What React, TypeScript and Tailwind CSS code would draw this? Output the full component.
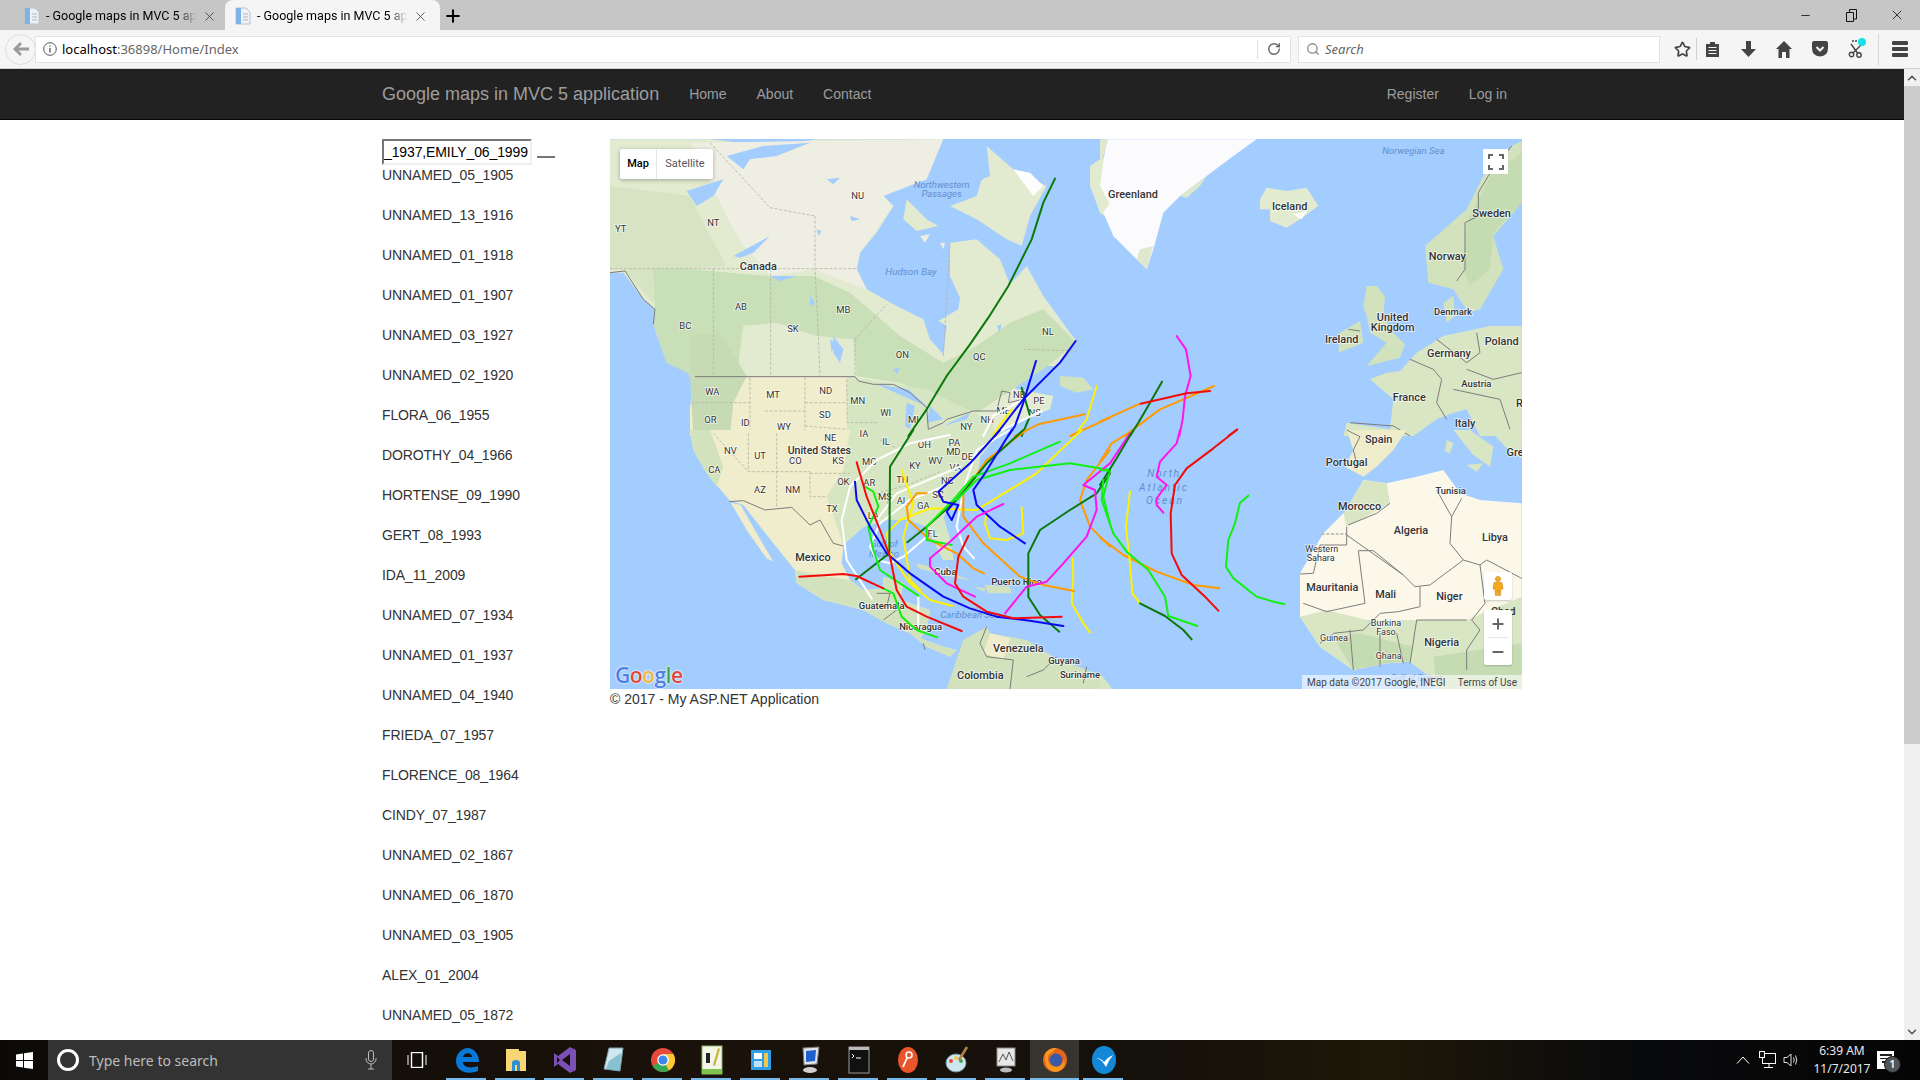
import { ChevronDown, ChevronUp, Minus, Plus, RotateCw, Search, Star, X } from "lucide-react";

const hurricanes = [
  "UNNAMED_05_1905", "UNNAMED_13_1916", "UNNAMED_01_1918", "UNNAMED_01_1907", "UNNAMED_03_1927", "UNNAMED_02_1920",
  "FLORA_06_1955", "DOROTHY_04_1966", "HORTENSE_09_1990", "GERT_08_1993", "IDA_11_2009", "UNNAMED_07_1934",
  "UNNAMED_01_1937", "UNNAMED_04_1940", "FRIEDA_07_1957", "FLORENCE_08_1964", "CINDY_07_1987", "UNNAMED_02_1867",
  "UNNAMED_06_1870", "UNNAMED_03_1905", "ALEX_01_2004", "UNNAMED_05_1872",
];

const GREEN = "#0b780b";
const LIME = "#12f012";
const BLUE = "#0a0af0";
const RED = "#f50a0a";
const ORANGE = "#ff9a00";
const YELLOW = "#fff200";
const MAGENTA = "#ff14ee";
const WHITE = "#ffffff";

type Track = [string, string];
type Label = [string, number, number, number?];

// paths below are in 3x crop coordinates, each group is scaled back down
const nwTracks: Track[] = [
  [GREEN, "M1335,128 L1300,200 L1265,310 L1195,450 L1135,545 L1080,625 L1010,720 L950,820 L895,900"],
  [GREEN, "M1235,755 L1260,840 L1235,900"],
  [WHITE, "M1240,790 L1150,840 L1120,900"],
  [WHITE, "M1295,825 L1160,890"],
  [YELLOW, "M1205,820 L1160,880 L1150,900"],
  [BLUE, "M1397,615 L1350,680 L1240,790 L1155,900"],
  [BLUE, "M1278,675 L1240,800 L1215,870 L1195,900"],
  [ORANGE, "M1425,835 L1285,865 L1215,900"],
  [YELLOW, "M1460,750 L1430,850 L1400,890"],
  [ORANGE, "M1500,845 L1380,900"],
];

const swTracks: Track[] = [
  [WHITE, "M1020,15 L900,40 L800,90 L720,170 L695,270 L710,390 L785,505"],
  [WHITE, "M1000,170 L900,210 L810,280 L780,350 L800,390 L840,400 L880,380 L950,320"],
  [WHITE, "M1200,0 L1100,60 L1060,180 L1040,290 L1060,350 L1092,385"],
  [WHITE, "M1050,110 L860,190 L800,270"],
  [WHITE, "M925,500 L925,590"],
  [YELLOW, "M1415,0 L1280,130 L1100,240 L960,235 L870,270 L830,310 L840,370 L900,460 L960,510 L1027,528"],
  [YELLOW, "M875,120 L910,220 L880,320 L900,450 L930,480"],
  [YELLOW, "M1235,232 L1240,310 L1190,330 L1140,325 L1125,280 L1130,250"],
  [YELLOW, "M1388,385 L1390,440 L1385,520 L1420,580 L1440,607"],
  [ORANGE, "M1250,0 L1130,90 L1060,190 L1060,260 L1120,340 L1230,440 L1300,465 L1392,483"],
  [ORANGE, "M950,190 L920,190 L890,230 L895,270 L960,330 L1040,370 L1090,415 L1122,430"],
  [ORANGE, "M1500,60 L1430,150 L1410,210 L1440,290 L1500,350"],
  [GREEN, "M910,0 L840,110 L838,370 L738,448"],
  [GREEN, "M1240,0 L1130,100 L1040,210 L950,290 L892,337"],
  [GREEN, "M1500,130 L1460,190 L1380,240 L1290,300 L1255,370 L1255,500 L1290,555 L1348,605"],
  [LIME, "M765,170 L790,185 L805,230 L775,290 L790,360 L810,420 L925,497"],
  [LIME, "M820,475 L850,490 L875,560 L920,600 L982,622"],
  [LIME, "M1350,35 L1200,100 L1090,140 L1030,210 L950,290 L950,330 L1025,345"],
  [LIME, "M1500,120 L1380,100 L1200,120 L1100,150 L1040,210"],
  [LIME, "M1500,120 L1480,200 L1500,280"],
  [BLUE, "M735,155 L740,210 L780,290 L830,370 L900,430 L1000,500 L1080,535 L1160,560 L1260,572 L1360,588"],
  [BLUE, "M1205,0 L1125,130 L1090,180 L1100,225 L1170,290 L1245,340"],
  [BLUE, "M1170,0 L1080,100 L985,185 L1000,215 L1045,225 L1025,270 L1010,245 L1030,220"],
  [MAGENTA, "M1180,222 L1100,260 L1020,335 L960,385 L960,410 L1010,460 L1095,500"],
  [MAGENTA, "M1500,100 L1420,165 L1455,180 L1460,240 L1430,320 L1360,400 L1310,455 L1250,470 L1185,550"],
  [RED, "M740,97 L770,200 L810,300 L840,380 L860,480 L890,530 L950,560 L1055,603"],
  [RED, "M568,440 L700,432 L740,438 L820,475"],
  [RED, "M1075,318 L1045,380 L1035,460 L1060,500 L1130,545 L1210,565 L1355,560"],
];

const neTracks: Track[] = [
  [ORANGE, "M342,750 L180,820 L100,880 L75,900"],
  [ORANGE, "M0,857 L120,803"],
  [GREEN, "M186,737 L150,800 L115,860 L90,900"],
  [MAGENTA, "M230,600 L258,640 L272,720 L255,780 L248,850 L238,900"],
  [RED, "M122,803 L260,772 L330,765"],
  [RED, "M412,880 L385,900"],
];

const seTracks: Track[] = [
  [ORANGE, "M100,0 L35,40 L0,95"],
  [ORANGE, "M0,322 L70,375 L170,425 L280,465 L358,475"],
  [MAGENTA, "M90,10 L30,100"],
  [GREEN, "M100,0 L50,85 L0,165"],
  [LIME, "M25,122 L0,120"],
  [YELLOW, "M90,185 L78,290 L90,400 L97,490 L120,520"],
  [LIME, "M10,150 L5,210 L40,310 L80,365 L145,420 L195,500 L205,558 L292,588"],
  [GREEN, "M120,520 L195,558 L250,600 L275,628"],
  [MAGENTA, "M240,0 L230,40 L180,95 L170,140 L200,165 L170,205 L170,225 L190,248"],
  [RED, "M410,0 L340,55 L260,115 L225,165 L212,250 L215,370 L245,435 L320,505 L355,542"],
  [LIME, "M445,197 L420,218 L405,280 L385,330 L378,410 L400,445 L470,500 L520,515 L553,522"],
];

const nwLabels: Label[] = [
  ["NU", 743, 188], ["NT", 310, 269], ["YT", 32, 287], ["AB", 393, 521], ["BC", 226, 578], ["SK", 549, 587],
  ["MB", 700, 530], ["ON", 877, 665], ["QC", 1108, 671], ["NL", 1314, 596], ["WA", 307, 776], ["MT", 489, 785],
  ["ND", 647, 773], ["MN", 743, 803], ["WI", 827, 839], ["MI", 910, 860], ["OR", 301, 860], ["ID", 406, 869],
  ["SD", 645, 845], ["WY", 522, 881], ["NY", 1069, 881], ["NH", 1132, 860], ["ME", 1180, 834], ["NB", 1228, 785],
  ["PE", 1287, 803], ["NS", 1274, 839], ["Canada", 445, 403, 29],
];
const swLabels: Label[] = [
  ["NE", 661, 32], ["IA", 762, 20], ["IL", 828, 44], ["OH", 943, 53], ["PA", 1033, 47], ["MD", 1030, 74], ["DE", 1072, 89],
  ["NV", 361, 71], ["UT", 450, 86], ["CO", 556, 101], ["KS", 684, 101], ["MO", 778, 104], ["KY", 915, 116], ["WV", 976, 101],
  ["VA", 1036, 122], ["CA", 313, 128], ["TN", 877, 158], ["NC", 1012, 161], ["OK", 700, 164], ["AR", 778, 167], ["AZ", 450, 188],
  ["NM", 548, 188], ["MS", 825, 209], ["AL", 877, 221], ["SC", 984, 203], ["GA", 940, 236], ["TX", 666, 245], ["LA", 790, 266], ["FL", 968, 320],
  ["United States", 628, 72, 28], ["Mexico", 609, 394, 29], ["Cuba", 1006, 434, 26], ["Puerto Rico", 1220, 465, 26],
  ["Guatemala", 815, 536, 25], ["Nicaragua", 932, 600, 25], ["Venezuela", 1225, 667, 29], ["Colombia", 1111, 748, 29],
  ["Guyana", 1362, 702, 25], ["Suriname", 1410, 744, 25],
];
const neLabels: Label[] = [
  ["Greenland", 99, 187, 29], ["Iceland", 569, 222, 29], ["Sweden", 1175, 244, 29], ["Norway", 1042, 371, 29],
  ["Denmark", 1059, 537, 25], ["United", 878, 556, 29], ["Kingdom", 878, 586, 29], ["Ireland", 725, 622, 29],
  ["Poland", 1205, 628, 29], ["Germany", 1047, 664, 29], ["Austria", 1129, 752, 25], ["France", 928, 796, 29], ["Italy", 1095, 874, 29], ["R", 1258, 812, 29],
];
const seLabels: Label[] = [
  ["Spain", 836, 40, 29], ["Portugal", 740, 109, 29], ["Gre", 1245, 79, 29], ["Tunisia", 1052, 192, 25], ["Morocco", 779, 241, 29],
  ["Algeria", 933, 313, 29], ["Libya", 1185, 334, 29], ["Western", 665, 366, 24], ["Sahara", 662, 393, 24], ["Mauritania", 697, 484, 29],
  ["Mali", 857, 505, 29], ["Niger", 1048, 511, 29], ["Burkina", 858, 588, 24], ["Faso", 858, 615, 24], ["Guinea", 702, 633, 24],
  ["Nigeria", 1025, 649, 29], ["Ghana", 866, 687, 24],
];

function Tracks({ items }: { items: Track[] }) {
  return (
    <g fill="none" strokeWidth="6" strokeLinejoin="round" strokeLinecap="round">
      {items.map(([color, d], i) => (
        <path key={i} d={d} stroke={color} />
      ))}
    </g>
  );
}

function Labels({ items }: { items: Label[] }) {
  return (
    <g className="font-['Roboto',sans-serif]" textAnchor="middle" fill="#333" stroke="#ffffff" strokeOpacity="0.7" strokeWidth="5" paintOrder="stroke">
      {items.map(([text, x, y, size], i) => (
        <text key={i} x={x} y={y} fontSize={(size ?? 25) * 1.13} fontWeight={size && size > 24 ? 500 : 400}>
          {text}
        </text>
      ))}
    </g>
  );
}

function SeaLabel({ x, y, size, spacing, children }: { x: number; y: number; size: number; spacing?: number; children: string }) {
  return (
    <text x={x} y={y} fontSize={size * 1.1} letterSpacing={spacing} textAnchor="middle" fontStyle="italic" fill="#5f8fd0" className="font-['Roboto',sans-serif]">
      {children}
    </text>
  );
}

function MapDrawing() {
  return (
    <svg viewBox="610 139 912 550" className="block h-[550px] w-[912px] bg-[#a3ccff]">
      <defs>
        <filter id="soft" x="0" y="0" width="100%" height="100%">
          <feGaussianBlur stdDeviation="2" />
        </filter>
      </defs>
      {/* north-west: Canada and northern US */}
      <g transform="translate(610 136) scale(0.33333)">
        <g filter="url(#soft)">
          <path fill="#e2ead0" d="M0,10 L300,10 L480,30 L620,10 L1000,10 L960,60 L950,130 L880,150 L820,180 L850,210 L800,290 L750,350 L740,400 L770,460 L860,510 L940,550 L960,610 L1000,655 L1010,570 L985,555 L1045,520 L1050,485 L1020,420 L1020,320 L1100,310 L1170,370 L1200,445 L1250,390 L1300,480 L1380,590 L1400,615 L1340,690 L1260,690 L1180,720 L1220,760 L1280,770 L1330,780 L1320,820 L1220,860 L1150,900 L240,900 L240,820 L250,740 L230,700 L170,680 L130,565 L135,520 L100,490 L40,410 L0,410 Z" />
          <path fill="#eeeee3" d="M240,20 L1000,10 L950,130 L820,180 L850,210 L750,350 L740,400 L770,460 L690,430 L610,400 L480,420 L440,370 L400,330 L360,260 L330,200 Z" />
          <path fill="#d6e4c3" d="M0,150 L240,180 L300,300 L350,390 L230,400 L130,500 L40,400 L0,400 Z" />
          <path fill="#c9dfb8" d="M130,400 L250,400 L360,410 L480,420 L610,420 L720,470 L790,530 L870,600 L1000,680 L1100,630 L1200,560 L1300,520 L1400,620 L1300,700 L1100,830 L1000,800 L870,740 L740,720 L730,610 L620,600 L500,560 L400,570 L380,720 L250,720 L170,680 L130,565 L135,500 Z" />
          <path fill="#f0edcd" d="M255,722 L710,722 L712,900 L240,900 L240,820 Z" />
          <path fill="#c6dbb4" d="M240,600 L330,590 L410,720 L370,800 L360,900 L250,900 L240,720 Z" />
          <path fill="#d7e6c2" d="M710,722 L950,760 L1150,860 L1150,900 L712,900 Z" />
          <path fill="#e2ead0" d="M1020,210 L1100,180 L1115,130 L1140,120 L1130,30 L1210,100 L1310,150 L1260,240 L1235,330 L1190,310 L1100,250 Z" />
          <path fill="#fdfdfd" d="M1210,100 L1260,110 L1300,150 L1270,180 Z" />
          <path fill="#e2ead0" d="M890,190 L950,250 L985,270 L920,285 L880,250 Z" />
          <path fill="#eeeee3" d="M930,300 L960,295 L945,320 Z M990,320 L1005,320 L1000,340 Z M1040,80 L1075,70 L1070,115 L1040,115 Z" />
          <path fill="#d2e2bd" d="M1350,720 L1420,725 L1450,760 L1400,770 L1350,750 Z" />
          <path fill="#e2ead0" d="M1440,90 L1500,50 L1500,250 L1470,230 L1440,150 Z" />
          <path fill="#a3ccff" d="M350,60 L460,30 L600,20 L500,60 L420,70 L400,100 Z M230,165 L340,130 L310,180 L260,210 Z M370,360 L480,300 L430,350 L390,365 Z M480,420 L560,420 L510,435 Z M670,600 L700,640 L690,680 L670,650 Z M1000,10 L1130,20 L1120,130 L1010,180 L960,135 Z M800,745 L895,760 L950,810 L900,790 Z M890,800 L915,810 L900,880 L885,870 Z M960,810 L1000,850 L950,860 Z M1000,870 L1080,830 L1070,850 Z M1260,720 L1320,700 L1350,720 L1270,770 Z M620,280 L635,285 L625,300 Z M720,240 L750,250 L725,255 Z M650,130 L690,125 L670,145 Z M1160,570 L1175,565 L1170,590 Z M600,480 L615,500 L600,510 Z M660,610 L675,620 L665,650 Z M850,700 L870,695 L860,715 Z" />
          <path fill="#fdfdfd" d="M1480,170 L1500,130 L1500,200 Z" />
        </g>
        <g fill="none" stroke="#b5b5ab" strokeWidth="2.5" strokeDasharray="9 5">
          <path d="M0,398 L740,398 M310,398 L310,722 M482,398 L482,722 M615,240 L615,398 L625,600 L630,722 M735,610 L735,720 M735,610 L830,505 M480,215 L615,240 M300,20 L480,215 M1000,660 L1020,320 M1240,640 L1400,645" />
          <path d="M420,725 L420,900 M585,725 L585,900 M585,800 L710,800 M710,730 L712,860 L800,860 M465,825 L585,825 M245,800 L420,800 M585,870 L712,880" />
        </g>
        <path fill="none" stroke="#7b7b7b" strokeWidth="3" d="M255,722 L735,722 L745,735 L790,745 L850,745 L900,770 L950,815 L955,880 L1000,860 L1010,850 L1090,825 L1160,825 L1175,765 L1200,770 L1195,800 L1240,790 M0,410 L45,405 L100,490 L135,520 L130,565" />
      </g>

      {/* south-west: US, Mexico, Caribbean */}
      <g transform="translate(610 430) scale(0.33333)">
        <g filter="url(#soft)">
          <path fill="#f0edcd" d="M240,0 L1190,0 L1150,30 L1110,80 L1100,150 L1030,220 L1000,260 L1020,330 L1030,390 L1000,390 L960,310 L950,290 L900,270 L830,270 L760,290 L700,345 L695,400 L720,450 L760,480 L820,475 L820,440 L880,460 L870,510 L960,540 L950,600 L930,625 L1000,650 L1040,660 L1020,680 L950,650 L900,610 L830,580 L760,540 L640,510 L560,460 L555,420 L490,340 L400,225 L360,212 L290,130 L250,60 Z" />
          <path fill="#d7e6c2" d="M720,0 L1190,0 L1150,30 L1110,80 L1100,150 L1030,220 L1000,260 L1020,330 L1030,390 L1000,390 L960,310 L950,290 L900,270 L830,270 L760,290 L700,345 L650,200 L700,120 Z" />
          <path fill="#d2e2bd" d="M240,0 L300,0 L340,110 L320,170 L290,130 L250,60 Z M555,420 L650,440 L720,450 L760,480 L820,475 L820,440 L880,460 L870,510 L960,540 L950,600 L930,625 L1000,650 L1040,660 L1020,680 L950,650 L900,610 L830,580 L760,540 L640,510 L560,460 Z" />
          <path fill="#f0edcd" d="M362,218 L392,225 L440,310 L490,395 L470,385 L410,300 Z" />
          <path fill="#d2e2bd" d="M920,400 L1000,420 L1085,452 L1000,435 L925,415 Z M1125,465 L1200,470 L1205,490 L1135,490 Z M1090,470 L1125,475 L1125,485 Z" />
          <path fill="#d2e2bd" d="M1010,777 L1060,630 L1130,590 L1140,610 L1250,630 L1330,680 L1480,740 L1500,777 Z" />
          <path fill="#f0edcd" d="M1140,610 L1200,625 L1180,690 L1120,670 Z" />
        </g>
        <g fill="none" stroke="#b5b5a0" strokeWidth="2.5" strokeDasharray="9 5">
          <path d="M310,10 L415,125 L600,125 M415,10 L415,125 M500,10 L500,230 M600,125 L600,200 L650,200 M600,130 L720,130 M720,60 L620,60 M810,30 L870,60 M875,170 L800,190 M830,200 L840,270 M880,205 L900,260 M990,125 L880,170" />
        </g>
        <path fill="none" stroke="#7b7b7b" strokeWidth="3" d="M358,215 L400,212 L465,240 L545,232 L600,285 L630,270 L670,340 L700,348 M800,490 L840,490 L830,530 M860,540 L820,570 M1130,590 L1110,640 L1130,680 L1210,690 L1200,777 M1340,680 L1300,720 L1250,740 M1430,710 L1420,760 M940,640 L945,660" />
      </g>

      {/* north-east: Greenland and Europe */}
      <g transform="translate(1100 136) scale(0.33333)">
        <g filter="url(#soft)">
          <path fill="#fbfbfd" d="M20,10 L470,10 L400,60 L320,120 L240,180 L190,230 L160,340 L140,400 L110,370 L40,300 L10,230 L30,200 L0,150 Z" />
          <path fill="#dde8cc" d="M0,10 L25,10 L10,60 L0,80 Z M120,340 L160,330 L140,400 L110,370 Z M240,180 L320,120 L300,150 L260,185 Z" />
          <path fill="#e2ead0" d="M480,190 L500,155 L560,165 L620,155 L655,210 L600,250 L560,275 L510,255 L510,220 L480,220 Z" />
          <path fill="#fdfdfd" d="M580,235 L620,225 L605,250 Z" />
          <path fill="#d2e2bd" d="M1265,15 L1235,30 L1150,120 L1100,220 L975,330 L985,440 L1060,460 L1105,530 L1140,520 L1210,400 L1180,300 L1265,200 Z" />
          <path fill="#c5dcb2" d="M1170,120 L1265,50 L1265,200 L1180,290 L1170,400 L1110,450 L1090,400 L1100,260 Z" />
          <path fill="#d2e2bd" d="M790,510 L800,450 L830,450 L855,480 L850,540 L880,590 L915,625 L900,665 L800,690 L860,620 L810,590 L800,540 Z M715,650 L720,590 L780,555 L790,620 Z M1030,500 L1060,480 L1065,540 L1040,560 Z" />
          <path fill="#d9e6c4" d="M1265,570 L1170,570 L1030,600 L950,650 L900,705 L860,710 L810,730 L880,790 L870,880 L740,860 L730,900 L940,900 L1010,850 L1060,830 L1100,820 L1140,900 L1265,900 Z" />
        </g>
        <path fill="none" stroke="#7b7b7b" strokeWidth="3" d="M1235,30 L1165,120 L1135,170 L1135,240 L1095,260 L1095,400 L1070,435 M1130,590 L1140,650 L1100,680 L1010,610 M930,670 L1000,700 L1025,730 L1010,800 L1040,850 M1100,700 L1180,730 L1265,710 M1060,760 L1200,790 L1230,880 M750,860 L880,870 L930,900 M745,580 L780,585" />
      </g>

      {/* south-east: Spain, north and west Africa */}
      <g transform="translate(1100 430) scale(0.33333)">
        <g filter="url(#soft)">
          <path fill="#efecc9" d="M740,0 L920,0 L880,60 L830,110 L790,140 L735,110 L760,60 Z" />
          <path fill="#d9e6c4" d="M1060,0 L1110,0 L1180,50 L1170,110 L1120,75 Z M1170,0 L1265,0 L1265,85 L1225,60 Z" />
          <path fill="#fbf8ea" d="M790,150 L860,160 L950,140 L1030,120 L1080,190 L1140,210 L1265,220 L1265,777 L1010,777 L990,740 L930,695 L860,700 L760,720 L660,650 L600,560 L600,430 L670,310 L750,230 Z" />
          <path fill="#d9e6c4" d="M790,150 L860,160 L870,220 L780,270 L740,290 L730,250 Z M600,560 L680,540 L800,570 L950,570 L1100,570 L1265,500 L1265,777 L1010,777 L990,740 L930,695 L860,700 L760,720 L660,650 Z" />
          <path fill="#c5dcb2" d="M700,620 L780,610 L940,650 L930,695 L860,700 L760,720 Z M1000,680 L1265,640 L1265,777 L1010,777 Z" />
          <path fill="#d9e6c4" d="M0,777 L0,735 L25,760 L35,777 Z M1040,30 L1060,40 L1050,70 L1035,65 Z M1100,105 L1150,100 L1130,125 Z" />
        </g>
        <path fill="none" stroke="#b0b0a8" strokeWidth="4" strokeDasharray="9 5" d="M665,312 L740,312" />
        <path fill="none" stroke="#7b7b7b" strokeWidth="3" d="M740,0 L780,20 L760,60 L770,100 M740,290 L740,345 L660,345 L640,430 L600,432 M740,315 L910,435 L945,470 L990,465 L1090,390 L1140,405 L1160,390 L1265,445 M775,362 L820,362 L910,435 M775,362 L795,520 L680,545 L610,520 M960,470 L960,530 L895,545 L840,550 L790,600 L700,610 L660,640 M1050,340 L1090,390 M1055,260 L1050,340 M1010,180 L1055,260 M1085,205 L1055,260 M1140,405 L1155,520 L1115,570 L1140,600 L1100,660 L1100,720 M950,570 L1100,570 M950,570 L930,700 M840,610 L840,710 M890,610 L910,700 M750,600 L760,720 M870,220 L830,250 L745,285" />
      </g>

      {/* sea names, then labels, with the tracks on top */}
      <g transform="translate(610 136) scale(0.33333)">
        <SeaLabel x={995} y={156} size={26}>Northwestern</SeaLabel>
        <SeaLabel x={995} y={184} size={26}>Passages</SeaLabel>
        <SeaLabel x={903} y={417} size={27}>Hudson Bay</SeaLabel>
        <Labels items={nwLabels} />
      </g>
      <g transform="translate(610 430) scale(0.33333)">
        <SeaLabel x={822} y={350} size={26}>Gulf of</SeaLabel>
        <SeaLabel x={822} y={380} size={26}>Mexico</SeaLabel>
        <SeaLabel x={1080} y={564} size={26}>Caribbean Sea</SeaLabel>
        <Labels items={swLabels} />
      </g>
      <g transform="translate(1100 136) scale(0.33333)">
        <SeaLabel x={940} y={54} size={26}>Norwegian Sea</SeaLabel>
        <Labels items={neLabels} />
      </g>
      <g transform="translate(1100 430) scale(0.33333)">
        <SeaLabel x={192} y={142} size={28} spacing={5}>North</SeaLabel>
        <SeaLabel x={192} y={182} size={28} spacing={6}>Atlantic</SeaLabel>
        <SeaLabel x={195} y={221} size={28} spacing={6}>Ocean</SeaLabel>
        <SeaLabel x={950} y={752} size={23}>Gulf of Guinea</SeaLabel>
        <Labels items={seLabels} />
        <text x={1210} y={554} fontSize={32} fontWeight={500} textAnchor="middle" fill="#333" className="font-['Roboto',sans-serif]">Chad</text>
      </g>
      <g transform="translate(610 136) scale(0.33333)"><Tracks items={nwTracks} /></g>
      <g transform="translate(610 430) scale(0.33333)"><Tracks items={swTracks} /></g>
      <g transform="translate(1100 136) scale(0.33333)"><Tracks items={neTracks} /></g>
      <g transform="translate(1100 430) scale(0.33333)"><Tracks items={seTracks} /></g>
    </svg>
  );
}

function MapPanel() {
  return (
    <div className="relative h-[550px] w-[912px] overflow-hidden font-['Roboto',sans-serif]">
      <MapDrawing />
      <div className="absolute left-[10px] top-[10px] flex h-[30px] rounded-[2px] bg-white text-[11px] shadow-[0_1px_4px_rgba(0,0,0,0.3)]">
        <div className="flex w-[37px] items-center justify-center border-r border-[#e6e6e6] font-medium text-black">Map</div>
        <div className="flex w-[56px] items-center justify-center text-[#565656]">Satellite</div>
      </div>
      <div className="absolute left-[873px] top-[10px] flex h-[25px] w-[25px] items-center justify-center bg-white">
        <svg width="16" height="16" viewBox="0 0 16 16" fill="none" stroke="#666" strokeWidth="2">
          <path d="M1,5 V1 H5 M11,1 H15 V5 M15,11 V15 H11 M5,15 H1 V11" />
        </svg>
      </div>
      <div className="absolute left-[874px] top-[433px] flex h-[28px] w-[28px] items-center justify-center rounded-[2px] bg-white shadow-[0_1px_2px_rgba(0,0,0,0.2)]">
        <svg width="12" height="20" viewBox="0 0 12 20" fill="#f4a91f" stroke="#c98a10" strokeWidth="0.6">
          <circle cx="6" cy="3" r="2.6" />
          <path d="M2,6.5 H10 L11,13 H9 L8.5,19.5 H6.6 L6,14 L5.4,19.5 H3.5 L3,13 H1 Z" />
        </svg>
      </div>
      <div className="absolute left-[874px] top-[471px] flex h-[55px] w-[28px] flex-col items-center rounded-[2px] bg-white text-[#666] shadow-[0_1px_2px_rgba(0,0,0,0.2)]">
        <div className="flex h-[27px] items-center"><Plus size={16} strokeWidth={3} /></div>
        <div className="h-px w-5 bg-[#e6e6e6]" />
        <div className="flex h-[27px] items-center"><Minus size={16} strokeWidth={3} /></div>
      </div>
      <div className="absolute left-[5px] top-[524px] font-['Open_Sans',sans-serif] text-[21px] font-semibold leading-6 tracking-[-0.5px] [text-shadow:0_0_2px_#fff,0_0_2px_#fff]">
        <span className="text-[#4a80e8]">G</span>
        <span className="text-[#e0483a]">o</span>
        <span className="text-[#f2b632]">o</span>
        <span className="text-[#4a80e8]">g</span>
        <span className="text-[#35a853]">l</span>
        <span className="text-[#e0483a]">e</span>
      </div>
      <div className="absolute bottom-0 right-0 flex h-[14px] w-[220px] items-center justify-between bg-white/60 px-[5px] text-[10px] text-[#444]">
        <span className="whitespace-nowrap">Map data ©2017 Google, INEGI</span>
        <span className="whitespace-nowrap">Terms of Use</span>
      </div>
    </div>
  );
}

function PageIcon() {
  return (
    <svg width="16" height="18" viewBox="0 0 16 18" className="shrink-0">
      <path d="M1,1 H11 L15,5 V17 H1 Z" fill="#eef2f6" stroke="#b9c2cc" />
      <rect x="1" y="1" width="5" height="16" fill="#7fb2e5" />
      <path d="M8,7 H13 M8,10 H13 M8,13 H13" stroke="#b0b8c2" />
    </svg>
  );
}

function Tab({ active, width }: { active?: boolean; width: string }) {
  return (
    <div className={active ? "flex h-[30px] shrink-0 items-center gap-[6px] rounded-t-[8px] bg-[#f5f5f5] pl-[10px] pr-[8px] pt-[2px]" : "flex h-[30px] shrink-0 items-center gap-[6px] pl-[24px] pr-[6px] pt-[2px]"} style={{ width }}>
      <PageIcon />
      <span className="w-[150px] overflow-hidden whitespace-nowrap font-['Roboto',sans-serif] text-[12.5px] text-black [mask-image:linear-gradient(to_right,black_88%,transparent)]">- Google maps in MVC 5 app</span>
      <X size={15} strokeWidth={1.2} className="shrink-0 text-[#333]" />
    </div>
  );
}

function BrowserChrome() {
  return (
    <div className="h-[69px] shrink-0 font-['Noto_Sans',sans-serif]">
      <div className="flex h-[30px] items-center bg-[#c6c6c6]">
        <Tab width="225px" />
        <Tab active width="215px" />
        <Plus size={20} strokeWidth={2.5} className="ml-[3px] mt-[2px] text-black" />
        <div className="ml-auto flex items-center text-black">
          <div className="flex w-[46px] justify-center"><Minus size={13} strokeWidth={1.4} /></div>
          <div className="flex w-[46px] justify-center">
            <svg width="11" height="13" viewBox="0 0 11 13" fill="none" stroke="#111"><path d="M0.5,3.5 H7.5 V12.5 H0.5 Z M3.5,3 V0.5 H10.5 V10 H8" /></svg>
          </div>
          <div className="flex w-[46px] justify-center"><X size={16} strokeWidth={1.1} /></div>
        </div>
      </div>
      <div className="flex h-[39px] items-center border-b border-[#cfcfcf] bg-[#f5f5f5] pl-[5px]">
        <div className="z-10 flex h-[31px] w-[31px] shrink-0 items-center justify-center rounded-full border border-[#dedede] bg-[#f5f5f5]">
          <svg width="16" height="14" viewBox="0 0 16 14" fill="#9a9a9a"><path d="M7,0 L0,7 L7,14 L9,12 L5.5,8.5 H16 V5.5 H5.5 L9,2 Z" /></svg>
        </div>
        <div className="-ml-px flex h-[27px] w-[1256px] shrink-0 items-center border border-[#e3e3e3] bg-white">
          <svg width="14" height="14" viewBox="0 0 14 14" fill="none" stroke="#555" className="ml-[7px] shrink-0">
            <circle cx="7" cy="7" r="6.3" />
            <path d="M7,6 V10.5 M7,3.4 V4.8" strokeWidth="1.3" />
          </svg>
          <span className="ml-[5px] pt-[1px] text-[13px] text-black">localhost<span className="text-[#666]">:36898/Home/Index</span></span>
          <div className="ml-auto flex h-full w-[34px] items-center justify-center">
            <div className="mr-[9px] h-[19px] w-px bg-[#e0e0e0]" />
            <RotateCw size={14} strokeWidth={2.4} className="text-[#666]" />
          </div>
          <div className="w-[4px]" />
        </div>
        <div className="ml-[7px] flex h-[27px] w-[362px] shrink-0 items-center gap-[5px] border border-[#e3e3e3] bg-white pl-[7px]">
          <Search size={14} strokeWidth={2.2} className="text-[#8a8a8a]" />
          <span className="pt-[1px] text-[13px] italic text-[#666]">Search</span>
        </div>
        <div className="flex flex-1 items-center text-[#444]">
          <div className="ml-[11px] flex w-[22px] justify-center"><Star size={17} strokeWidth={2.4} /></div>
          <div className="ml-[3px] h-[22px] w-px bg-[#cfcfcf]" />
          <div className="ml-[6px] flex w-[18px] justify-center">
            <svg width="15" height="17" viewBox="0 0 15 17" fill="#444"><path d="M1,3 H5 V1 H10 V3 H14 V16 H1 Z" /><path d="M3.5,6.5 H11.5 M3.5,9.5 H11.5 M3.5,12.5 H11.5" stroke="#f5f5f5" strokeWidth="1.2" /></svg>
          </div>
          <div className="ml-[18px] flex w-[18px] justify-center">
            <svg width="15" height="16" viewBox="0 0 15 16" fill="#444"><path d="M5,0 H10 V8 H15 L7.5,16 L0,8 H5 Z" /></svg>
          </div>
          <div className="ml-[18px] flex w-[18px] justify-center">
            <svg width="16" height="17" viewBox="0 0 16 17" fill="#444"><path d="M8,0 L16,8 H13.5 V17 H10 V11 H6 V17 H2.5 V8 H0 Z" /></svg>
          </div>
          <div className="ml-[18px] flex w-[18px] justify-center">
            <svg width="16" height="16" viewBox="0 0 16 16"><path d="M0,2 Q0,0 2,0 H14 Q16,0 16,2 V7 Q16,15 8,15.5 Q0,15 0,7 Z" fill="#444" /><path d="M4.5,6 L8,9.5 L11.5,6" fill="none" stroke="#f5f5f5" strokeWidth="2" /></svg>
          </div>
          <div className="relative ml-[18px] flex w-[18px] justify-center">
            <svg width="17" height="18" viewBox="0 0 17 18" fill="none" stroke="#444" strokeWidth="1.4">
              <circle cx="3.5" cy="14.5" r="2.2" /><circle cx="11" cy="15" r="2.2" />
              <path d="M5,13 L13,5 M9.5,13 L3,4" />
              <path d="M4,1 H9" strokeDasharray="2 1" />
            </svg>
            <div className="absolute right-[-1px] top-[-2px] h-[8px] w-[8px] rounded-full bg-[#19dfe6]" />
          </div>
          <div className="ml-[13px] h-[31px] w-px bg-[#d6d6d6]" />
          <div className="ml-[13px] flex flex-col gap-[2.5px]">
            <div className="h-[3.5px] w-[16px] rounded-[1px] bg-[#444]" />
            <div className="h-[3.5px] w-[16px] rounded-[1px] bg-[#444]" />
            <div className="h-[3.5px] w-[16px] rounded-[1px] bg-[#444]" />
          </div>
        </div>
      </div>
    </div>
  );
}

function Navbar() {
  return (
    <div className="flex h-[51px] shrink-0 items-center border-b border-[#080808] bg-[#222] pl-[382px] pt-[1px] font-['Liberation_Sans',Arial,sans-serif] text-[14px] text-[#9d9d9d]">
      <div className="flex w-[1140px] items-center">
        <span className="mr-[30px] text-[18px]">Google maps in MVC 5 application</span>
        <span className="mr-[30px]">Home</span>
        <span className="mr-[30px]">About</span>
        <span>Contact</span>
        <span className="ml-auto mr-[30px]">Register</span>
        <span className="mr-[15px]">Log in</span>
      </div>
    </div>
  );
}

function Scrollbar() {
  return (
    <div className="flex h-full w-[16px] shrink-0 flex-col bg-[#f0f0f0] text-[#505050]">
      <div className="flex h-[17px] items-center justify-center"><ChevronUp size={14} strokeWidth={2.5} /></div>
      <div className="h-[658px] bg-[#cdcdcd]" />
      <div className="mt-auto flex h-[17px] items-center justify-center"><ChevronDown size={14} strokeWidth={2.5} /></div>
    </div>
  );
}

function Content() {
  return (
    <div className="flex min-h-0 flex-1 overflow-hidden bg-white font-['Liberation_Sans',Arial,sans-serif] text-[14px] text-[#333]">
      <div className="w-[382px] shrink-0" />
      <div className="w-[228px] shrink-0 pt-[19px] tracking-[-0.12px]">
        <div className="flex items-end">
          <input
            readOnly
            value="_1937,EMILY_06_1999"
            className="h-[26px] w-[150px] border-2 border-b-[#eee] border-l-[#767676] border-r-[#eee] border-t-[#767676] bg-white text-[14px] text-black outline-none"
          />
          <div className="mb-[7px] ml-[5px] h-[2px] w-[18px] bg-[#777]" />
        </div>
        {hurricanes.map((name, i) => (
          <div key={i} className="h-10 leading-5">{name}</div>
        ))}
      </div>
      <div className="pt-[19px]">
        <MapPanel />
        <p className="leading-5">© 2017 - My ASP.NET Application</p>
      </div>
    </div>
  );
}

function TaskIcon({ active, children }: { active?: boolean; children: React.ReactNode }) {
  return (
    <div className={active ? "relative flex h-full w-[49px] items-center justify-center bg-white/15" : "relative flex h-full w-[49px] items-center justify-center"}>
      {children}
      <div className={active ? "absolute bottom-0 left-0 h-[2px] w-full bg-[#76b9ed]" : "absolute bottom-0 left-[4px] h-[2px] w-[40px] bg-[#76b9ed]"} />
    </div>
  );
}

function Taskbar() {
  return (
    <div className="flex h-10 shrink-0 items-center bg-[linear-gradient(90deg,#0c0a08,#1a120a_35%,#14100a_60%,#1e1808_72%,#090a0c_85%,#050505)] font-['Noto_Sans',sans-serif] text-white">
      <div className="flex h-full w-12 items-center justify-center">
        <svg width="17" height="17" viewBox="0 0 17 17" fill="#fff"><path d="M0,2.4 L7,1.4 V8 H0 Z M8,1.3 L17,0 V8 H8 Z M0,9 H7 V15.6 L0,14.6 Z M8,9 H17 V17 L8,15.7 Z" /></svg>
      </div>
      <div className="flex h-full w-[344px] items-center bg-[#333]">
        <div className="ml-[9px] h-[22px] w-[22px] rounded-full border-[3px] border-white" />
        <span className="ml-[10px] text-[14px] text-[#bdbdbd]">Type here to search</span>
        <svg width="12" height="20" viewBox="0 0 12 20" fill="none" stroke="#bbb" className="ml-auto mr-[15px]">
          <rect x="3.5" y="0.5" width="5" height="11" rx="2.5" />
          <path d="M1,8 V9 A5,5 0 0 0 11,9 V8 M6,14 V19 M3,19 H9" />
        </svg>
      </div>
      <div className="flex h-full w-[50px] items-center justify-center">
        <svg width="20" height="16" viewBox="0 0 20 16" fill="none" stroke="#fff">
          <rect x="4.5" y="0.5" width="11" height="15" strokeWidth="1.4" />
          <path d="M1,3 V13 M19,3 V13" />
        </svg>
      </div>
      <TaskIcon>
        <svg width="24" height="26" viewBox="0 0 24 26"><path d="M12,1 C20,1 24,8 24,15 H8 C8,20 15,22 23,19 V24 C13,28 1,25 1,14 C1,7 6,2 12,1 Z M8,10 H17 C17,5 9,5 8,10 Z" fill="#0a78d7" fillRule="evenodd" /></svg>
      </TaskIcon>
      <TaskIcon>
        <svg width="22" height="24" viewBox="0 0 22 24"><path d="M1,1 H14 V3 H21 V23 H1 Z" fill="#f7d774" /><path d="M7,23 V15 Q7,12 11,12 Q15,12 15,15 V23 H12 V17 H10 V23 Z" fill="#2d8fd5" /></svg>
      </TaskIcon>
      <TaskIcon>
        <svg width="24" height="28" viewBox="0 0 24 28"><path d="M17,1 L23,4 V24 L17,27 L5,18 L1,21 V7 L5,10 Z M17,8 L9,14 L17,20 Z M4,11 V17 L7,14 Z" fill="#7b4fb3" fillRule="evenodd" /></svg>
      </TaskIcon>
      <TaskIcon>
        <svg width="22" height="26" viewBox="0 0 22 26"><path d="M6,1 H20 L17,24 L1,22 Z" fill="#cfe7ee" stroke="#7d9aa3" /><path d="M6,14 L18,6 L17,24 L3,22 Z" fill="#58a8bc" opacity="0.6" /></svg>
      </TaskIcon>
      <TaskIcon>
        <svg width="26" height="26" viewBox="0 0 26 26">
          <circle cx="13" cy="13" r="12" fill="#e44b3c" />
          <path d="M13,13 L2.6,19 A12,12 0 0 0 19,23.4 Z" fill="#35a853" />
          <path d="M13,13 L19,23.4 A12,12 0 0 0 23.4,7 L13,7 Z" fill="#fbc935" />
          <circle cx="13" cy="13" r="5.8" fill="#fff" />
          <circle cx="13" cy="13" r="4.5" fill="#3f86ee" />
        </svg>
      </TaskIcon>
      <TaskIcon>
        <svg width="22" height="30" viewBox="0 0 22 30"><rect x="1" y="1" width="20" height="28" fill="#f2f6e8" stroke="#8fb06a" /><rect x="1" y="24" width="20" height="5" fill="#7ec24f" /><path d="M5,8 H9 V18 H5 Z" fill="#222" /><path d="M12,20 L17,3 L19,4 L14,21 Z" fill="#c9b23a" /></svg>
      </TaskIcon>
      <TaskIcon>
        <svg width="22" height="22" viewBox="0 0 22 22"><rect x="1" y="1" width="20" height="20" fill="#2f9ee4" /><rect x="4" y="4" width="8" height="6" fill="#fff" /><rect x="14" y="4" width="4" height="14" fill="#f3c64a" /><rect x="4" y="12" width="8" height="6" fill="#bde3fa" /></svg>
      </TaskIcon>
      <TaskIcon>
        <svg width="22" height="28" viewBox="0 0 22 28"><path d="M4,2 L20,1 L18,18 L5,19 Z" fill="#dfe4ea" stroke="#777" /><path d="M7,5 L17,4 L16,15 L7,16 Z" fill="#1f5fd0" /><ellipse cx="11" cy="24" rx="7" ry="3" fill="#cfcfcf" /></svg>
      </TaskIcon>
      <TaskIcon>
        <svg width="22" height="28" viewBox="0 0 22 28"><rect x="1" y="1" width="20" height="26" fill="#111" stroke="#999" /><rect x="1" y="1" width="20" height="3" fill="#bbb" /><path d="M4,8 L6,10 L4,12 M8,12 H13" stroke="#fff" fill="none" /></svg>
      </TaskIcon>
      <TaskIcon>
        <svg width="22" height="28" viewBox="0 0 22 28"><ellipse cx="11" cy="14" rx="10" ry="13" fill="#e9552b" /><circle cx="12" cy="9" r="3" fill="none" stroke="#fff" strokeWidth="1.6" /><path d="M10,12 L6,21" stroke="#fff" strokeWidth="1.8" /></svg>
      </TaskIcon>
      <TaskIcon>
        <svg width="24" height="28" viewBox="0 0 24 28"><ellipse cx="11" cy="17" rx="10" ry="9" fill="#cfe6ef" stroke="#7795a3" /><circle cx="6" cy="15" r="2" fill="#e44b3c" /><circle cx="11" cy="12" r="2" fill="#f3c64a" /><circle cx="16" cy="15" r="2" fill="#35a853" /><path d="M14,14 L22,1" stroke="#b5813e" strokeWidth="2.5" /></svg>
      </TaskIcon>
      <TaskIcon>
        <svg width="22" height="28" viewBox="0 0 22 28"><rect x="2" y="2" width="18" height="18" fill="#e8e8e8" stroke="#888" /><path d="M4,16 L8,8 L11,14 L14,6 L18,15" fill="none" stroke="#555" /><ellipse cx="11" cy="24" rx="6" ry="2.6" fill="#bbb" /></svg>
      </TaskIcon>
      <TaskIcon active>
        <svg width="26" height="26" viewBox="0 0 26 26">
          <circle cx="13" cy="13" r="12" fill="#e8641b" />
          <circle cx="14" cy="13" r="6.5" fill="#3a5aa8" />
          <path d="M3,7 Q7,0 15,1 Q11,3 10,6 Q5,7 6,13 Q7,20 15,20 Q21,19 22,12 Q25,22 14,25 Q2,24 3,7 Z" fill="#f59a1d" />
        </svg>
      </TaskIcon>
      <TaskIcon>
        <svg width="26" height="30" viewBox="0 0 26 30"><ellipse cx="13" cy="15" rx="12" ry="14" fill="#1488d8" /><path d="M5,13 Q10,13 13,17 Q17,12 22,10 Q18,15 15,22 L13,19 Q10,14 5,13 Z" fill="#fff" /></svg>
      </TaskIcon>
      <div className="ml-auto flex h-full items-center">
        <svg width="14" height="8" viewBox="0 0 14 8" fill="none" stroke="#fff" className="mr-[9px]"><path d="M1,7.5 L7,1 L13,7.5" /></svg>
        <svg width="17" height="18" viewBox="0 0 17 18" fill="none" stroke="#fff" className="mr-[7px]"><rect x="3.5" y="2.5" width="13" height="10" /><rect x="0.5" y="0.5" width="5" height="6" fill="#111" /><path d="M10,13 V16 M5,16.5 H14" /></svg>
        <svg width="16" height="16" viewBox="0 0 16 16" fill="none" stroke="#ddd" className="mr-[13px]"><path d="M1,5.5 H4 L8,2 V14 L4,10.5 H1 Z M10.5,5.5 Q12,8 10.5,10.5 M12.5,3.5 Q15,8 12.5,12.5" /></svg>
        <div className="flex w-[60px] flex-col items-center text-[12px] leading-[18px] text-[#e8e8e8]">
          <span>6:39 AM</span>
          <span>11/7/2017</span>
        </div>
        <div className="relative ml-[5px] mr-[26px] h-[18px] w-[17px] bg-white">
          <div className="mx-auto mt-[3px] h-[1.5px] w-[12px] bg-[#222]" />
          <div className="mx-auto mt-[2px] h-[1.5px] w-[12px] bg-[#222]" />
          <div className="mx-auto mt-[2px] h-[1.5px] w-[8px] bg-[#222]" />
          <div className="absolute left-[7px] top-[5px] flex h-[17px] w-[17px] items-center justify-center rounded-full border border-[#111] bg-[#555] text-[11px] font-semibold">1</div>
        </div>
      </div>
    </div>
  );
}

export default function App() {
  return (
    <div className="flex h-screen w-full flex-col overflow-hidden bg-white">
      <BrowserChrome />
      <div className="flex min-h-0 flex-1">
        <div className="flex min-w-0 flex-1 flex-col">
          <Navbar />
          <Content />
        </div>
        <Scrollbar />
      </div>
      <Taskbar />
    </div>
  );
}
